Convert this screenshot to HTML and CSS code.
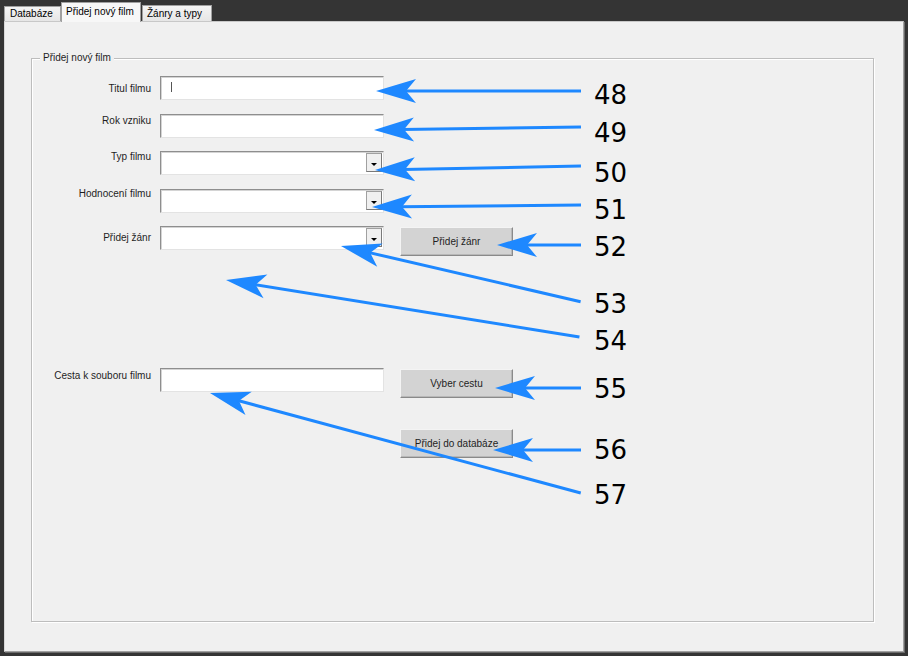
FILE: index.html
```html
<!DOCTYPE html>
<html lang="cs">
<head>
<meta charset="utf-8">
<title>Přidej nový film</title>
<link rel="stylesheet" href="styles.css">
</head>
<body>
<div class="app">
  <div class="tabs">
    <div class="tab tab-db">Databáze</div>
    <div class="tab tab-active">Přidej nový film</div>
    <div class="tab tab-genres">Žánry a typy</div>
  </div>
  <div class="panel">
    <div class="group">
      <span class="legend">Přidej nový film</span>
      <div class="row r1">
        <label class="lbl">Titul filmu</label>
        <div class="input"><span class="caret"></span></div>
      </div>
      <div class="row r2">
        <label class="lbl">Rok vzniku</label>
        <div class="input"></div>
      </div>
      <div class="row r3">
        <label class="lbl">Typ filmu</label>
        <div class="input combo"><span class="drop"><span class="tri"></span></span></div>
      </div>
      <div class="row r4">
        <label class="lbl">Hodnocení filmu</label>
        <div class="input combo"><span class="drop"><span class="tri"></span></span></div>
      </div>
      <div class="row r5">
        <label class="lbl">Přidej žánr</label>
        <div class="input combo"><span class="drop"><span class="tri"></span></span></div>
        <button class="btn">Přidej žánr</button>
      </div>
      <div class="row r6">
        <label class="lbl">Cesta k souboru filmu</label>
        <div class="input"></div>
        <button class="btn">Vyber cestu</button>
      </div>
      <div class="row r7">
        <button class="btn">Přidej do databáze</button>
      </div>
    </div>
  </div>

  <svg class="notes" width="908" height="656" viewBox="0 0 908 656">
    <g class="arr" transform="translate(376,91)"><path d="M0,0 L40,-12 L30,0 L40,12 Z"/><line x1="28" y1="0" x2="205" y2="0"/></g>
    <g class="arr" transform="translate(374,130) rotate(-0.83)"><path d="M0,0 L40,-12 L30,0 L40,12 Z"/><line x1="28" y1="0" x2="207" y2="0"/></g>
    <g class="arr" transform="translate(375,170) rotate(-1.1)"><path d="M0,0 L40,-12 L30,0 L40,12 Z"/><line x1="28" y1="0" x2="206" y2="0"/></g>
    <g class="arr" transform="translate(372,207) rotate(-0.55)"><path d="M0,0 L40,-12 L30,0 L40,12 Z"/><line x1="28" y1="0" x2="209" y2="0"/></g>
    <g class="arr" transform="translate(497,245)"><path d="M0,0 L40,-12 L30,0 L40,12 Z"/><line x1="28" y1="0" x2="84" y2="0"/></g>
    <g class="arr" transform="translate(341,246) rotate(13.1)"><path d="M0,0 L40,-12 L30,0 L40,12 Z"/><line x1="28" y1="0" x2="246" y2="0"/></g>
    <g class="arr" transform="translate(226,280) rotate(9.15)"><path d="M0,0 L40,-12 L30,0 L40,12 Z"/><line x1="28" y1="0" x2="358" y2="0"/></g>
    <g class="arr" transform="translate(495,388)"><path d="M0,0 L40,-12 L30,0 L40,12 Z"/><line x1="28" y1="0" x2="86" y2="0"/></g>
    <g class="arr" transform="translate(493,450)"><path d="M0,0 L40,-12 L30,0 L40,12 Z"/><line x1="28" y1="0" x2="88" y2="0"/></g>
    <g class="arr" transform="translate(210,393) rotate(15.1)"><path d="M0,0 L40,-12 L30,0 L40,12 Z"/><line x1="28" y1="0" x2="384" y2="0"/></g>
    <text x="594" y="104">48</text>
    <text x="594" y="142">49</text>
    <text x="594" y="182">50</text>
    <text x="594" y="219">51</text>
    <text x="594" y="256">52</text>
    <text x="594" y="313">53</text>
    <text x="594" y="350">54</text>
    <text x="594" y="398">55</text>
    <text x="594" y="459">56</text>
    <text x="594" y="504">57</text>
  </svg>
</div>
</body>
</html>
```
FILE: styles.css
```css
* { box-sizing: border-box; }
html, body {
  margin: 0;
  padding: 0;
  width: 908px;
  height: 656px;
  overflow: hidden;
  background: #343434;
  font-family: "Liberation Sans", Arial, sans-serif;
  font-size: 10px;
  color: #1e1e1e;
}
.app {
  position: relative;
  width: 908px;
  height: 656px;
}
.tabs {
  display: flex;
  align-items: flex-end;
  height: 21px;
  padding-left: 4px;
  position: relative;
  z-index: 2;
}
.tab {
  border: 1px solid #a0a0a0;
  border-bottom: none;
  background: linear-gradient(#f4f4f4, #e6e6e6);
  color: #000;
  font-size: 10px;
  line-height: 13px;
  padding-left: 5px;
  white-space: nowrap;
}
.tab-db {
  width: 57px;
  height: 15px;
}
.tab-active {
  width: 80px;
  height: 20px;
  margin-bottom: -1px;
  background: #f7f7f7;
  padding-left: 4px;
  padding-top: 2px;
}
.tab-genres {
  width: 70px;
  height: 16px;
  margin-left: 1px;
  padding-left: 4px;
  padding-top: 1px;
}
.panel {
  margin-left: 4px;
  width: 900px;
  height: 631px;
  background: #f0f0f0;
  border: 1px solid #a0a0a0;
  border-top-color: #c8c8c8;
  border-left-color: #d8d8d8;
  box-shadow: 1px 1px 0 #6a6a6a;
  padding-top: 36px;
  padding-left: 26px;
}
.group {
  position: relative;
  width: 843px;
  height: 564px;
  border: 1px solid #bdbdbd;
  box-shadow: 1px 1px 0 #ffffff, inset 1px 1px 0 #ffffff;
  padding-top: 17px;
}
.legend {
  position: absolute;
  top: -7px;
  left: 8px;
  padding: 0 3px 0 3px;
  background: #f0f0f0;
  line-height: 12px;
  color: #1e1e1e;
}
.row {
  display: flex;
  align-items: flex-start;
}
.lbl {
  width: 119px;
  margin-right: 9px;
  text-align: right;
  line-height: 12px;
  white-space: nowrap;
}
.r1 .lbl { margin-top: 7px; }
.r2 { margin-top: 14px; }
.r2 .lbl { margin-top: 1px; }
.r3 { margin-top: 13px; }
.r3 .lbl { margin-top: 0; }
.r4 { margin-top: 14px; }
.r4 .lbl { margin-top: -1px; }
.r5 { margin-top: 13px; }
.r5 .lbl { margin-top: 6px; }
.r6 { margin-top: 112px; }
.r6 .lbl { margin-top: 2px; }
.r7 {
  margin-top: 31px;
  padding-left: 368px;
}
.input {
  position: relative;
  width: 224px;
  height: 24px;
  background: #ffffff;
  border: 1px solid;
  border-color: #8e8e8e #e3e3e3 #e3e3e3 #8e8e8e;
  box-shadow: inset 1px 1px 0 #d4d4d4;
}
.caret {
  display: block;
  width: 1px;
  height: 10px;
  margin-left: 10px;
  margin-top: 5px;
  background: #555555;
}
.combo {
  display: flex;
  justify-content: flex-end;
  padding: 1px 1px 2px 0;
}
.drop {
  width: 16px;
  height: 100%;
  background: #f0f0f0;
  border: 1px solid;
  border-color: #a0a0a0 #7a7a7a #7a7a7a #a0a0a0;
  display: flex;
  align-items: center;
  justify-content: center;
  padding-top: 3px;
}
.tri {
  width: 0;
  height: 0;
  border-left: 3px solid transparent;
  border-right: 3px solid transparent;
  border-top: 3px solid #000;
}
.btn {
  width: 113px;
  height: 29px;
  margin-left: 16px;
  margin-top: 1px;
  padding: 0;
  background: #d3d3d3;
  border: 1px solid;
  border-color: #f4f4f4 #8a8a8a #8a8a8a #f4f4f4;
  box-shadow: inset -1px -1px 0 #b8b8b8;
  font-family: "Liberation Sans", Arial, sans-serif;
  font-size: 10px;
  color: #1e1e1e;
  line-height: 12px;
}
.r7 .btn {
  margin-left: 0;
  margin-top: 0;
}
.notes {
  position: absolute;
  left: 0;
  top: 0;
  pointer-events: none;
  z-index: 5;
}
.notes .arr path {
  fill: #1e88ff;
}
.notes .arr line {
  stroke: #1e88ff;
  stroke-width: 3;
}
.notes text {
  font-family: "DejaVu Sans", sans-serif;
  font-size: 26px;
  fill: #000;
}
```
